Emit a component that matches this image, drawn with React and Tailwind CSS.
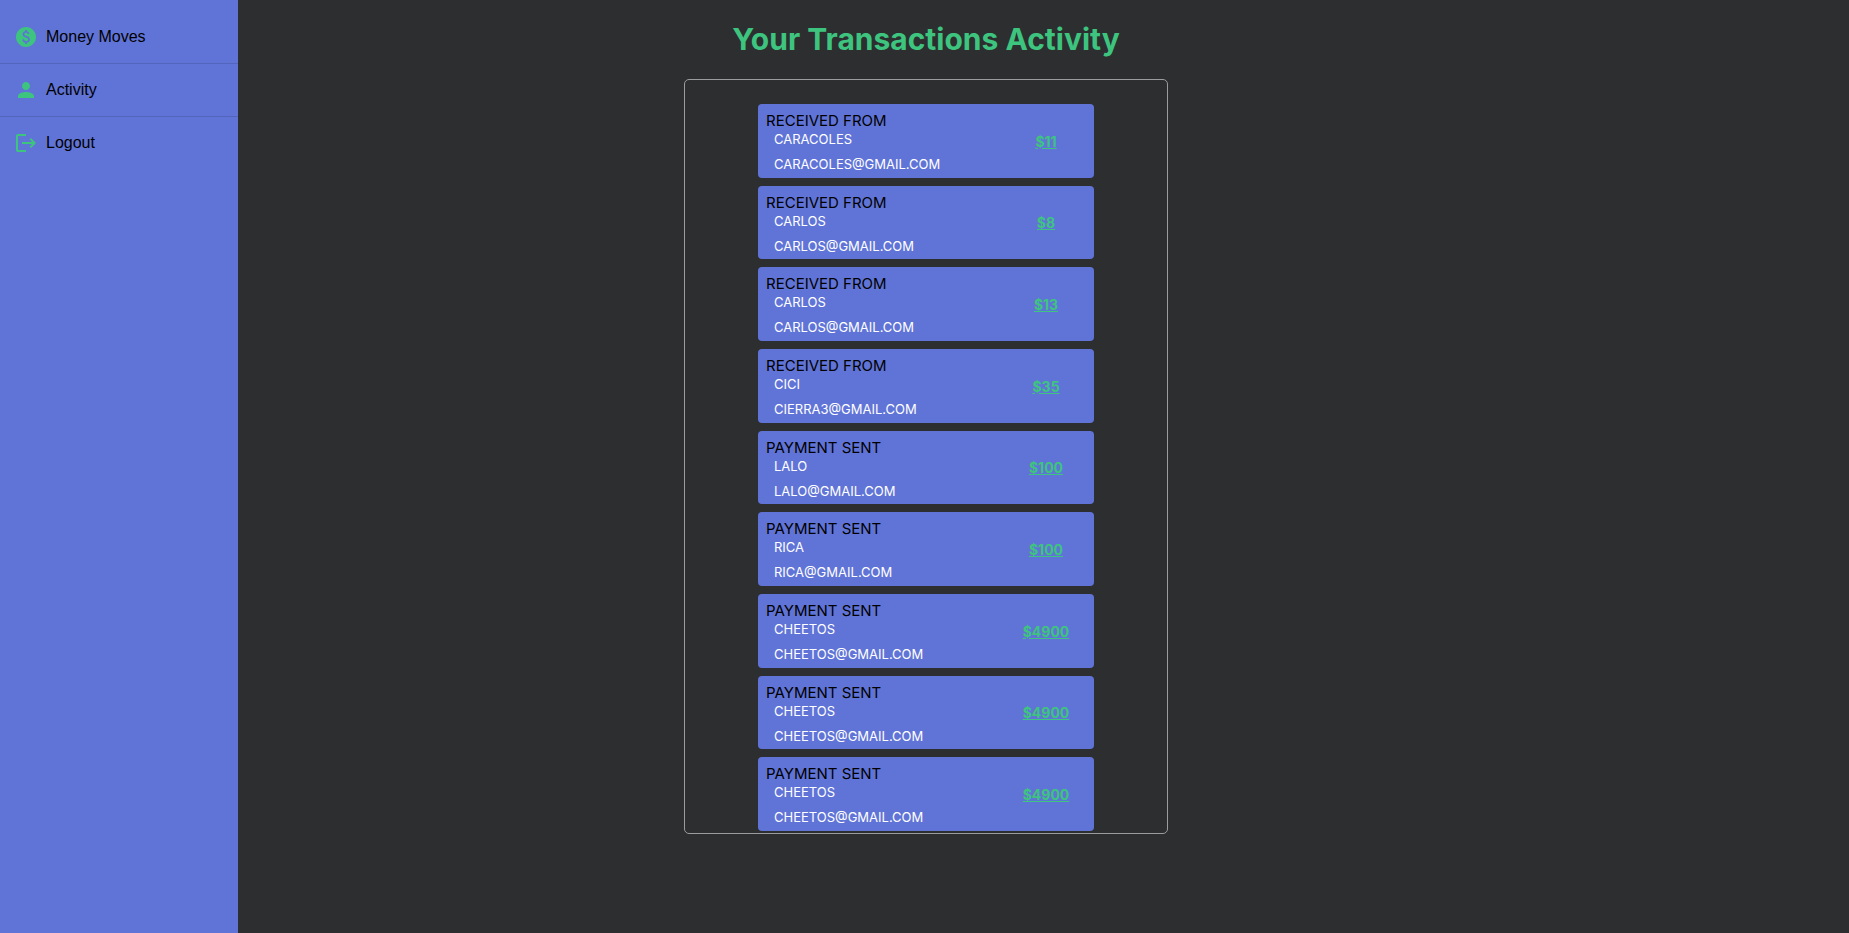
import React from "react";
import { MdPaid, MdPerson } from "react-icons/md";

const transactions = [
  { id: 1, label: "RECEIVED FROM", name: "CARACOLES", email: "CARACOLES@GMAIL.COM", amount: "$11" },
  { id: 2, label: "RECEIVED FROM", name: "CARLOS", email: "CARLOS@GMAIL.COM", amount: "$8" },
  { id: 3, label: "RECEIVED FROM", name: "CARLOS", email: "CARLOS@GMAIL.COM", amount: "$13" },
  { id: 4, label: "RECEIVED FROM", name: "CICI", email: "CIERRA3@GMAIL.COM", amount: "$35" },
  { id: 5, label: "PAYMENT SENT", name: "LALO", email: "LALO@GMAIL.COM", amount: "$100" },
  { id: 6, label: "PAYMENT SENT", name: "RICA", email: "RICA@GMAIL.COM", amount: "$100" },
  { id: 7, label: "PAYMENT SENT", name: "CHEETOS", email: "CHEETOS@GMAIL.COM", amount: "$4900" },
  { id: 8, label: "PAYMENT SENT", name: "CHEETOS", email: "CHEETOS@GMAIL.COM", amount: "$4900" },
  { id: 9, label: "PAYMENT SENT", name: "CHEETOS", email: "CHEETOS@GMAIL.COM", amount: "$4900" },
];

function LogoutIcon({ className }) {
  return (
    <svg viewBox="0 0 24 24" fill="currentColor" className={className} aria-hidden="true">
      <path d="m17 7-1.41 1.41L18.17 11H8v2h10.17l-2.58 2.58L17 17l5-5zM4 5h8V3H4c-1.1 0-2 .9-2 2v14c0 1.1.9 2 2 2h8v-2H4z" />
    </svg>
  );
}

const links = [
  { text: "Money Moves", Icon: MdPaid },
  { text: "Activity", Icon: MdPerson },
  { text: "Logout", Icon: LogoutIcon },
];

function Sidebar() {
  return (
    <nav className="bg-[#6074d7] pt-[11px] font-['Liberation_Sans',Arial,sans-serif]">
      <ul className="divide-y divide-[#5264bb]">
        {links.map(({ text, Icon }) => (
          <li key={text}>
            <a href="#" className="flex h-[52px] items-center gap-2 px-3.5 text-base text-black">
              <Icon className="size-6 shrink-0 text-[#3dc47e]" />
              {text}
            </a>
          </li>
        ))}
      </ul>
    </nav>
  );
}

function Transaction({ label, name, email, amount }) {
  return (
    <li className="grid grid-cols-[1fr_80px] rounded bg-[#6074d7] px-2">
      <div className="pt-1.5">
        <h2 className="text-[15px] leading-[22px] text-black">{label}</h2>
        <p className="px-2 text-[13px] leading-[14px] text-white">{name}</p>
        <p className="mt-[11px] px-2 text-[13px] leading-[14px] text-white">{email}</p>
      </div>
      <div className="flex items-center justify-center pt-0.5">
        <a href="#" className="text-sm font-bold text-[#3dc47e] underline">
          {amount}
        </a>
      </div>
    </li>
  );
}

export default function App() {
  return (
    <div className="grid min-h-screen grid-cols-[238px_1fr_235px] bg-[#2d2e30] font-[Inter,sans-serif]">
      <Sidebar />
      <main className="flex flex-col items-center pt-5">
        <h1 className="text-3xl leading-[38px] font-bold text-[#3dc47e]">Your Transactions Activity</h1>
        <section className="mt-[21px] flex min-h-[755px] w-full max-w-[484px] flex-col rounded-[5px] border border-[#9b9c9d] pt-6 pb-0.5">
          <ul className="mx-auto grid w-[336px] flex-1 auto-rows-fr gap-2">
            {transactions.map((t) => (
              <Transaction key={t.id} {...t} />
            ))}
          </ul>
        </section>
      </main>
    </div>
  );
}
